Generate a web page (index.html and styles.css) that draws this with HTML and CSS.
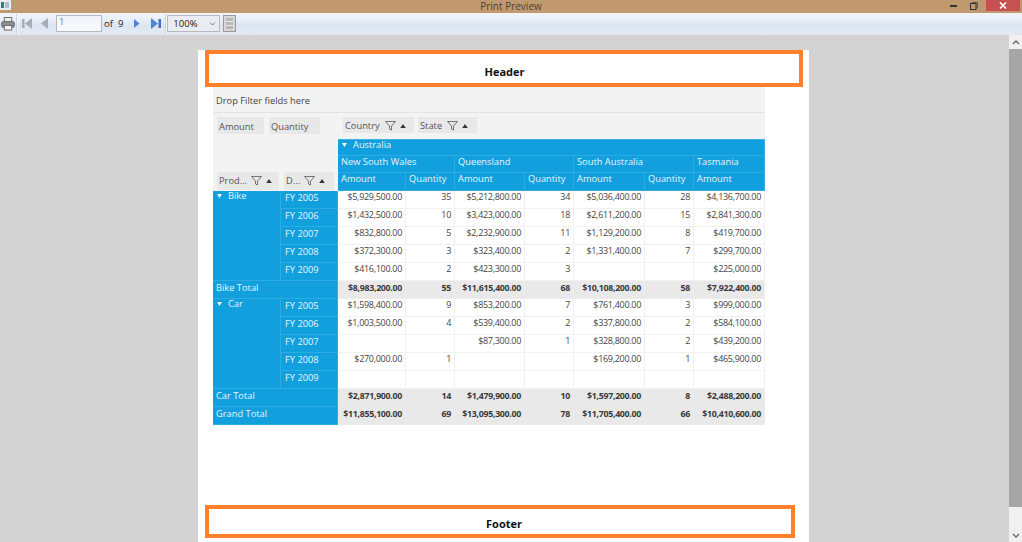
FILE: index.html
```html
<!DOCTYPE html>
<html lang="en">
<head>
<meta charset="utf-8">
<title>Print Preview</title>
<link rel="stylesheet" href="styles.css">
</head>
<body>
<div class="window">
  <div class="titlebar">
    <svg class="app-icon" width="11" height="10" viewBox="0 0 11 10"><rect width="11" height="10" fill="#e8eef0"/><rect x="1" y="2" width="3" height="6" fill="#2d7d7a"/><rect x="5" y="2" width="4" height="6" fill="#a9bcc8"/></svg>
    <span class="title">Print Preview</span>
    <div class="controls">
      <svg class="ctl" width="7" height="2" viewBox="0 0 7 2"><rect width="7" height="2" fill="#333"/></svg>
      <svg class="ctl" width="8" height="8" viewBox="0 0 8 8"><path d="M2 1.5V.5h5.500v5.500H6.500" fill="none" stroke="#555"/><rect x=".5" y="1.500" width="5.500" height="6" fill="none" stroke="#333"/></svg>
      <div class="close"><svg width="8" height="7" viewBox="0 0 8 7"><path d="M1 .5l6 6M7 .5l-6 6" stroke="#fff" stroke-width="1.600"/></svg></div>
    </div>
  </div>
  <div class="toolbar">
    <svg class="i-print" width="14" height="14" viewBox="0 0 15 15"><rect x="3.500" y=".5" width="8" height="5" fill="#eee" stroke="#666"/><rect x=".8" y="5" width="13.400" height="6" rx="1.500" fill="#8a8f96" stroke="#666"/><rect x="3.500" y="9" width="8" height="5" fill="#f4f4f4" stroke="#666"/></svg>
    <span class="sep s1"></span>
    <svg class="i-first" width="10" height="11" viewBox="0 0 10 11"><rect x="0" y="1" width="2.500" height="9" fill="#a9adb2"/><path d="M10 0v11L3 5.500z" fill="#a9adb2"/></svg>
    <svg class="i-prev" width="9" height="11" viewBox="0 0 9 11"><path d="M8 0v11L1 5.500z" fill="#a9adb2"/></svg>
    <span class="page-input">1</span>
    <span class="of">of</span>
    <span class="num">9</span>
    <svg class="i-next" width="7" height="11" viewBox="0 0 7 11"><path d="M1 1v9l5.500-4.500z" fill="#4a86d8"/></svg>
    <svg class="i-last" width="10" height="11" viewBox="0 0 10 11"><path d="M0 0v11l7-5.500z" fill="#4a86d8"/><rect x="7.500" y="1" width="2.500" height="9" fill="#3f72bd"/></svg>
    <span class="sep s2"></span>
    <span class="combo">100%<svg width="7" height="4" viewBox="0 0 7 4"><path d="M1 .5l2.500 2.500L6 .5" fill="none" stroke="#777"/></svg></span>
    <svg class="i-view" width="13" height="17" viewBox="0 0 13 17"><rect x=".5" y=".5" width="12" height="16" fill="#d8d8d8" stroke="#999"/><rect x="3" y="3" width="7" height="11" fill="#b8b8b8"/><path d="M3 6.500h7M3 10.500h7" stroke="#eee"/></svg>
  </div>
  <div class="viewer">
    <div class="canvas">
      <div class="page">
        <div class="band head">Header</div>
        <div class="pivot">
          <div class="filterbar">Drop Filter fields here</div>
          <div class="fields-left"><span class="chip c-amount">Amount</span><span class="chip c-qty">Quantity</span></div>
          <div class="fields-right">
            <span class="chip c-country">Country
              <svg class="funnel" viewBox="0 0 11 10"><path d="M.5.5h10L6.500 5v4L4.500 8V5z" fill="none" stroke="#555" stroke-width=".8"/></svg><svg class="tri" viewBox="0 0 7 5"><path d="M3.500 0L7 5H0z" fill="#333"/></svg></span>
            <span class="chip c-state">State
              <svg class="funnel" viewBox="0 0 11 10"><path d="M.5.5h10L6.500 5v4L4.500 8V5z" fill="none" stroke="#555" stroke-width=".8"/></svg><svg class="tri" viewBox="0 0 7 5"><path d="M3.500 0L7 5H0z" fill="#333"/></svg></span>
          </div>
          <div class="corner"></div>
          <div class="hd span7 top"><svg class="exp" viewBox="0 0 6 5"><path d="M0 0h6L3 5z" fill="#fff"/></svg>Australia</div>
          <div class="hd span2">New South Wales</div>
          <div class="hd span2">Queensland</div>
          <div class="hd span2">South Australia</div>
          <div class="hd">Tasmania</div>
          <div class="chipcell"><span class="chip c-prod">Prod...
            <svg class="funnel" viewBox="0 0 11 10"><path d="M.5.5h10L6.500 5v4L4.500 8V5z" fill="none" stroke="#555" stroke-width=".8"/></svg><svg class="tri" viewBox="0 0 7 5"><path d="M3.500 0L7 5H0z" fill="#333"/></svg></span></div>
          <div class="chipcell"><span class="chip c-date">D...
            <svg class="funnel" viewBox="0 0 11 10"><path d="M.5.5h10L6.500 5v4L4.500 8V5z" fill="none" stroke="#555" stroke-width=".8"/></svg><svg class="tri" viewBox="0 0 7 5"><path d="M3.500 0L7 5H0z" fill="#333"/></svg></span></div>
          <div class="hd">Amount</div><div class="hd">Quantity</div><div class="hd">Amount</div><div class="hd">Quantity</div><div class="hd">Amount</div><div class="hd">Quantity</div><div class="hd">Amount</div>

          <div class="rh group"><svg class="exp" viewBox="0 0 6 5"><path d="M0 0h6L3 5z" fill="#fff"/></svg>Bike</div>
          <div class="rh yr">FY 2005</div><div class="v">$5,929,500.00</div><div class="v">35</div><div class="v">$5,212,800.00</div><div class="v">34</div><div class="v">$5,036,400.00</div><div class="v">28</div><div class="v">$4,136,700.00</div>
          <div class="rh yr">FY 2006</div><div class="v">$1,432,500.00</div><div class="v">10</div><div class="v">$3,423,000.00</div><div class="v">18</div><div class="v">$2,611,200.00</div><div class="v">15</div><div class="v">$2,841,300.00</div>
          <div class="rh yr">FY 2007</div><div class="v">$832,800.00</div><div class="v">5</div><div class="v">$2,232,900.00</div><div class="v">11</div><div class="v">$1,129,200.00</div><div class="v">8</div><div class="v">$419,700.00</div>
          <div class="rh yr">FY 2008</div><div class="v">$372,300.00</div><div class="v">3</div><div class="v">$323,400.00</div><div class="v">2</div><div class="v">$1,331,400.00</div><div class="v">7</div><div class="v">$299,700.00</div>
          <div class="rh yr">FY 2009</div><div class="v">$416,100.00</div><div class="v">2</div><div class="v">$423,300.00</div><div class="v">3</div><div class="v"></div><div class="v"></div><div class="v">$225,000.00</div>

          <div class="rh total">Bike Total</div><div class="v t">$8,983,200.00</div><div class="v t">55</div><div class="v t">$11,615,400.00</div><div class="v t">68</div><div class="v t">$10,108,200.00</div><div class="v t">58</div><div class="v t">$7,922,400.00</div>

          <div class="rh group"><svg class="exp" viewBox="0 0 6 5"><path d="M0 0h6L3 5z" fill="#fff"/></svg>Car</div>
          <div class="rh yr">FY 2005</div><div class="v">$1,598,400.00</div><div class="v">9</div><div class="v">$853,200.00</div><div class="v">7</div><div class="v">$761,400.00</div><div class="v">3</div><div class="v">$999,000.00</div>
          <div class="rh yr">FY 2006</div><div class="v">$1,003,500.00</div><div class="v">4</div><div class="v">$539,400.00</div><div class="v">2</div><div class="v">$337,800.00</div><div class="v">2</div><div class="v">$584,100.00</div>
          <div class="rh yr">FY 2007</div><div class="v"></div><div class="v"></div><div class="v">$87,300.00</div><div class="v">1</div><div class="v">$328,800.00</div><div class="v">2</div><div class="v">$439,200.00</div>
          <div class="rh yr">FY 2008</div><div class="v">$270,000.00</div><div class="v">1</div><div class="v"></div><div class="v"></div><div class="v">$169,200.00</div><div class="v">1</div><div class="v">$465,900.00</div>
          <div class="rh yr">FY 2009</div><div class="v"></div><div class="v"></div><div class="v"></div><div class="v"></div><div class="v"></div><div class="v"></div><div class="v"></div>

          <div class="rh total">Car Total</div><div class="v t">$2,871,900.00</div><div class="v t">14</div><div class="v t">$1,479,900.00</div><div class="v t">10</div><div class="v t">$1,597,200.00</div><div class="v t">8</div><div class="v t">$2,488,200.00</div>
          <div class="rh total">Grand Total</div><div class="v t">$11,855,100.00</div><div class="v t">69</div><div class="v t">$13,095,300.00</div><div class="v t">78</div><div class="v t">$11,705,400.00</div><div class="v t">66</div><div class="v t">$10,410,600.00</div>
        </div>
        <div class="band foot">Footer</div>
      </div>
    </div>
    <div class="scrollbar">
      <div class="arrow"><svg width="8" height="5" viewBox="0 0 8 5"><path d="M1 4l3-3 3 3" fill="none" stroke="#666" stroke-width="1.300"/></svg></div>
      <div class="thumb"></div>
      <div class="arrow"><svg width="8" height="5" viewBox="0 0 8 5"><path d="M1 1l3 3 3-3" fill="none" stroke="#666" stroke-width="1.300"/></svg></div>
    </div>
  </div>
</div>
</body>
</html>
```

FILE: styles.css
```css
* { box-sizing: border-box; }
html, body { margin: 0; height: 100%; overflow: hidden; }
body { font-family: "Open Sans", "Noto Sans", sans-serif; font-size: 9.3px; color: #444; }
.window { display: flex; flex-direction: column; height: 542px; width: 1022px; }

.titlebar { height: 13px; background: #c0996e; display: flex; align-items: flex-start; justify-content: center; position: relative; }
.title { font-size: 10px; line-height: 12px; color: #4f4232; }
.app-icon { position: absolute; left: 0; top: 0; }
.controls { position: absolute; right: 2px; top: 0; display: flex; align-items: center; }
.ctl:nth-child(1) { margin-right: 13px; }
.ctl:nth-child(2) { margin-right: 8px; }
.close { width: 34px; height: 11px; background: #c75050; display: flex; align-items: center; justify-content: center; }

.toolbar { height: 22px; flex: none; background: linear-gradient(#f2f5fa, #e9eff8 30%, #dce5f2 60%, #e3eaf5); border-bottom: 1px solid #e6e6ea; display: flex; align-items: center; font-size: 9.5px; color: #222; padding-left: 1px; }
.sep { width: 2px; height: 20px; background: #c9d2de; border-right: 1px solid #f5f7fb; }
.s1 { margin-left: 1px; margin-right: 4px; }
.i-prev { margin-left: 8px; }
.page-input { margin-left: 7px; width: 46px; height: 17px; background: linear-gradient(#f0f3f8, #f8f9fc); border: 1px solid #b4b9c0; padding-left: 2px; line-height: 12px; color: #777; }
.of { margin-left: 2px; }
.num { margin-left: 5px; }
.i-next { margin-left: 10px; }
.i-last { margin-left: 11px; }
.s2 { margin-left: 4px; margin-right: 0; }
.combo { width: 53px; height: 17px; border: 1px solid #b4b9c0; background: #e9edf3; display: flex; align-items: center; justify-content: space-between; padding: 0 3px 0 5px; }
.i-view { margin-left: 3px; }

.viewer { flex: 1; display: flex; min-height: 0; background: #d3d3d3; }
.canvas { flex: 1; padding: 15px 0 0 198px; overflow: hidden; }
.page { width: 611px; height: 520px; background: #fff; display: flex; flex-direction: column; align-items: flex-start; }

.band { border: 4px solid #ff7f2a; font-weight: 700; font-size: 11px; line-height: 14px; color: #111; display: flex; justify-content: center; align-items: flex-end; }
.head { margin-left: 7px; width: 598px; height: 37px; padding: 0 0 4px 1px; }
.foot { margin-left: 7px; width: 590px; height: 33px; margin-top: 80px; padding: 0 0 3px 8px; }

.pivot { margin-left: 15px; display: grid; grid-template-columns: 68px 57px 68px 49px 70px 49px 71px 49px 71px; grid-template-rows: 26px 26px 17px 17px 18px; grid-auto-rows: 18px; width: 552px; }
.filterbar { grid-column: span 9; background: #f3f3f3; border-bottom: 1px solid #e4e4e4; padding: 7px 0 0 3px; line-height: 14px; }
.fields-left { grid-column: span 2; background: #f3f3f3; display: flex; padding: 4px 0 0 4px; gap: 5px; align-items: flex-start; }
.fields-right { grid-column: span 7; background: #f3f3f3; display: flex; padding: 4px 0 0 5px; gap: 4px; align-items: flex-start; }
.corner { grid-column: span 2; grid-row: span 2; background: #f3f3f3; }
.chipcell { background: #f3f3f3; padding-left: 4px; }
.chipcell + .chipcell { padding-left: 3px; }
.chip { display: flex; align-items: center; background: #e8e8e8; height: 17px; padding-left: 2px; white-space: nowrap; color: #555; }
.c-amount, .c-qty { padding-top: 2px; }
.c-amount { width: 47px; } .c-qty { width: 51px; }
.c-country { width: 71px; height: 16px; padding-top: 1px; } .c-state { width: 59px; height: 16px; padding-top: 1px; }
.c-prod { width: 62px; height: 18px; padding-bottom: 1px; margin-top: -1px; } .c-date { width: 50px; height: 18px; padding-bottom: 1px; margin-top: -1px; }
.funnel { width: 11px; height: 10px; margin-left: 5px; flex: none; }
.tri { width: 6px; height: 4px; margin-left: 4px; flex: none; }
.c-date .funnel, .c-prod .funnel { margin-left: 4px; }

.hd, .rh { background: #129fdd; color: #e6f5fc; line-height: 14px; padding-left: 3px; border-right: 1px solid #2dace3; border-bottom: 1px solid #2dace3; white-space: nowrap; }
.hd { padding-top: 0; line-height: 12px; padding-left: 3px; }
.top { line-height: 10px; border-top: 1px solid #3cb2e6; }
.span7 { grid-column: span 7; }
.span2 { grid-column: span 2; }
.exp { width: 5px; height: 4px; margin: 0 6px 1px 1px; }
.group { grid-row: span 5; line-height: 10px; padding-left: 3px; }
.yr { padding-left: 4px; line-height: 14px; }
.total { grid-column: span 2; padding-left: 3px; }
.v { text-align: right; padding: 0 3px 0 0; line-height: 12px; font-size: 9px; letter-spacing: -0.3px; color: #444; border-right: 1px solid #f1f1f1; border-bottom: 1px solid #f1f1f1; white-space: nowrap; background: #fff; }
.t { background: #e9e9e9; font-weight: 700; font-size: 8.8px; line-height: 14px; border-color: #ececec; color: #3a3a3a; }

.scrollbar { width: 13px; flex: none; background: #f0f0f0; display: flex; flex-direction: column; }
.arrow { height: 14px; display: flex; align-items: center; justify-content: center; flex: none; }
.thumb { height: 458px; background: #a6a6a6; }
.scrollbar .arrow:last-child { margin-top: auto; }
```
